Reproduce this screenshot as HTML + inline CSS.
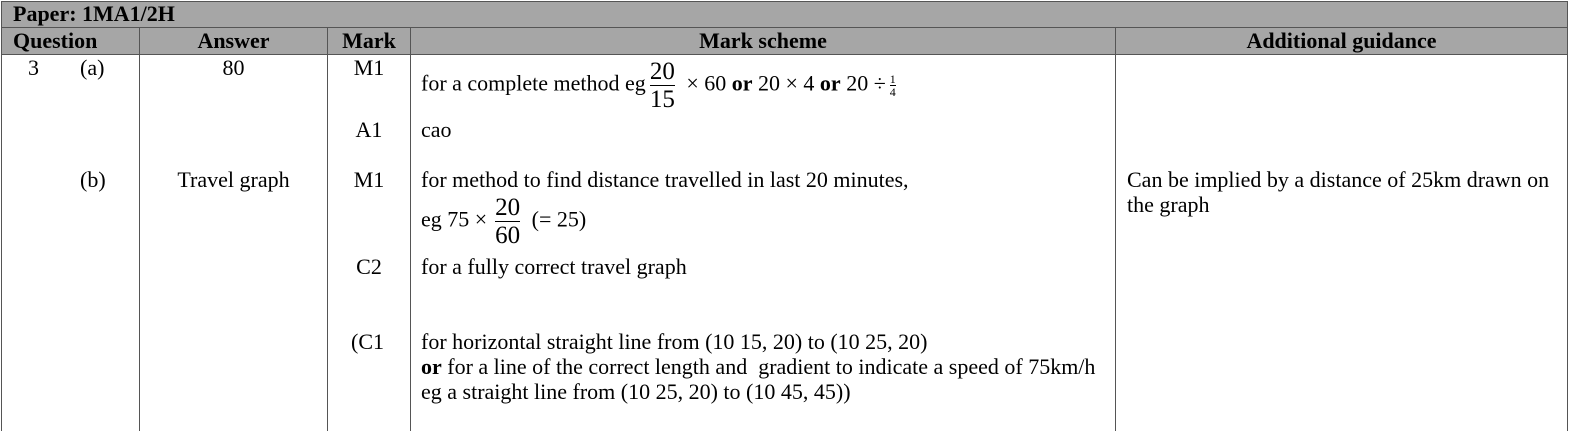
<html><head><style>
*{font-family:"Liberation Serif","Times New Roman","DejaVu Serif",serif}
body{margin:0;width:1575px;height:431px;background:#fff;position:relative;overflow:hidden;font-size:22px;color:#000}
.a{position:absolute;white-space:nowrap;line-height:24px}
.h{position:absolute;background:#a6a6a6}
.l{position:absolute;background:#555}
b{font-weight:bold}
.c{text-align:center}
.fr{display:inline-block;vertical-align:middle;text-align:center;font-size:25px;line-height:27px;margin:0 6px}
.fr span{display:block;border-top:1px solid #000;}
.sf{display:inline-block;vertical-align:middle;text-align:center;font-size:12px;line-height:12px;margin-left:4px}
.sf span{display:block;border-top:1px solid #000}
</style></head><body>
<div class="h" style="left:1px;top:1px;width:1566px;height:53px"></div>
<div class="l" style="left:1px;top:1px;width:1567px;height:1px"></div>
<div class="l" style="left:1px;top:27px;width:1567px;height:1px"></div>
<div class="l" style="left:1px;top:54px;width:1567px;height:1px"></div>
<div class="l" style="left:1px;top:1px;width:1px;height:430px"></div>
<div class="l" style="left:1567px;top:1px;width:1px;height:430px"></div>
<div class="l" style="left:139px;top:27px;width:1px;height:404px"></div>
<div class="l" style="left:327px;top:27px;width:1px;height:404px"></div>
<div class="l" style="left:410px;top:27px;width:1px;height:404px"></div>
<div class="l" style="left:1115px;top:27px;width:1px;height:404px"></div>
<div class="a" style="left:13px;top:2px"><b>Paper: 1MA1/2H</b></div>
<div class="a" style="left:13px;top:29px"><b>Question</b></div>
<div class="a c" style="left:140px;width:187px;top:29px"><b>Answer</b></div>
<div class="a c" style="left:328px;width:82px;top:29px"><b>Mark</b></div>
<div class="a c" style="left:411px;width:704px;top:29px"><b>Mark scheme</b></div>
<div class="a c" style="left:1116px;width:451px;top:29px"><b>Additional guidance</b></div>
<div class="a" style="left:28px;top:56px">3</div>
<div class="a" style="left:80px;top:56px">(a)</div>
<div class="a c" style="left:140px;width:187px;top:56px">80</div>
<div class="a c" style="left:328px;width:82px;top:56px">M1</div>
<div class="a" style="left:421px;top:58px;line-height:27px">for a complete method eg<span class="fr" style="margin-left:4px">20<span>15</span></span> × 60 <b>or</b> 20 × 4 <b>or</b> 20 ÷<span class="sf">1<span>4</span></span></div>
<div class="a c" style="left:328px;width:82px;top:118px">A1</div>
<div class="a" style="left:421px;top:118px">cao</div>
<div class="a" style="left:80px;top:168px">(b)</div>
<div class="a c" style="left:140px;width:187px;top:168px">Travel graph</div>
<div class="a c" style="left:328px;width:82px;top:168px">M1</div>
<div class="a" style="left:421px;top:168px">for method to find distance travelled in last 20 minutes,</div>
<div class="a" style="left:421px;top:194px;line-height:27px">eg 75 ×<span class="fr" style="margin-left:8px">20<span>60</span></span> (= 25)</div>
<div class="a" style="left:1127px;top:168px">Can be implied by a distance of 25km drawn on</div>
<div class="a" style="left:1127px;top:193px">the graph</div>
<div class="a c" style="left:328px;width:82px;top:255px">C2</div>
<div class="a" style="left:421px;top:255px">for a fully correct travel graph</div>
<div class="a" style="left:351px;top:330px">(C1</div>
<div class="a" style="left:421px;top:330px">for horizontal straight line from (10 15, 20) to (10 25, 20)</div>
<div class="a" style="left:421px;top:355px"><b>or</b> for a line of the correct length and&nbsp; gradient to indicate a speed of 75km/h</div>
<div class="a" style="left:421px;top:380px">eg a straight line from (10 25, 20) to (10 45, 45))</div>
</body></html>
